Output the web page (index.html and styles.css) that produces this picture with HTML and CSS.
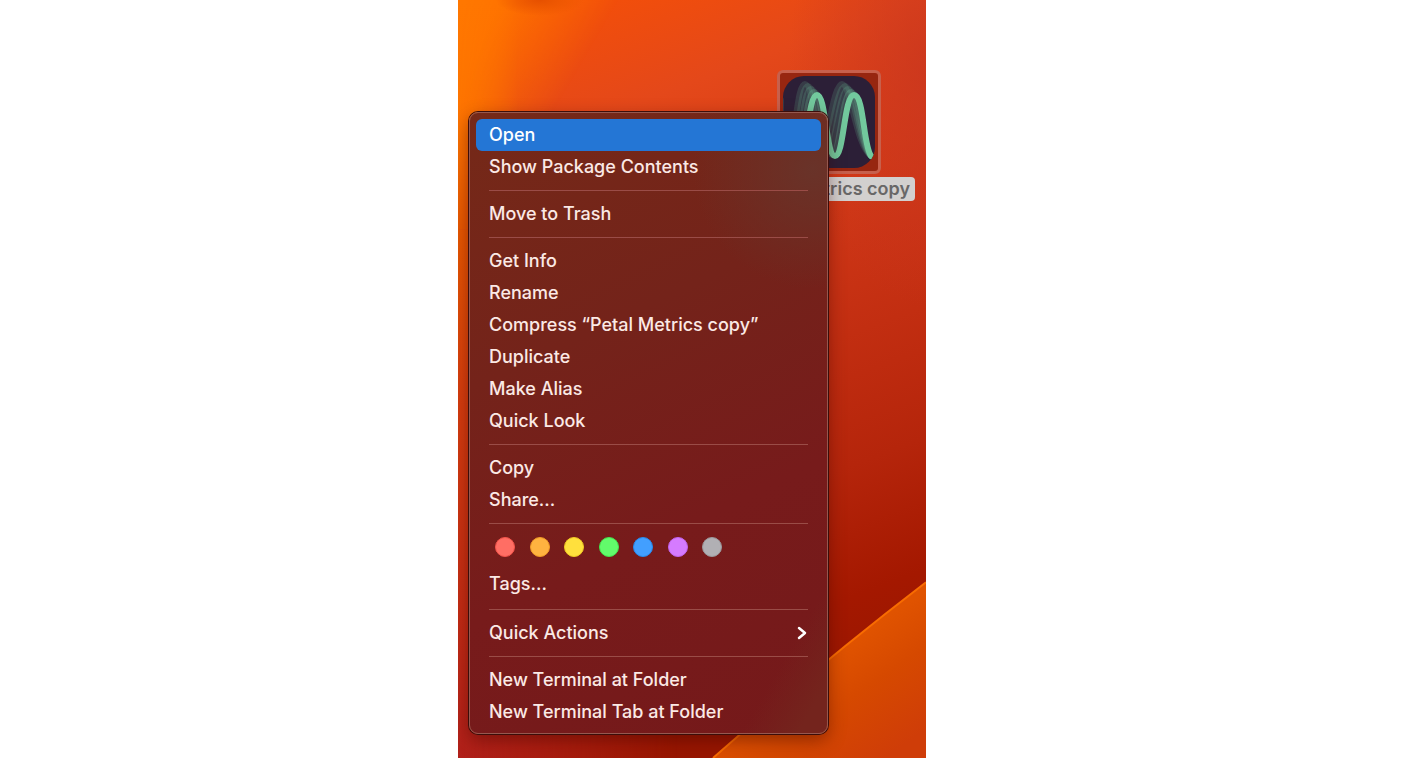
FILE: index.html
```html
<!DOCTYPE html>
<html lang="en">
<head>
<meta charset="utf-8">
<title>Desktop</title>
<link rel="stylesheet" href="styles.css">
</head>
<body>
<main class="desktop">
  <svg class="wallpaper" viewBox="0 0 468 759" preserveAspectRatio="none" aria-hidden="true">
    <defs>
      <linearGradient id="base" gradientUnits="userSpaceOnUse" x1="60" y1="0" x2="330" y2="720">
        <stop offset="0" stop-color="#f65006"/>
        <stop offset=".18" stop-color="#e4481a"/>
        <stop offset=".45" stop-color="#cb3415"/>
        <stop offset=".72" stop-color="#b5250b"/>
        <stop offset=".88" stop-color="#a41800"/>
        <stop offset="1" stop-color="#981600"/>
      </linearGradient>
      <linearGradient id="edge" x1="0" y1="0" x2="0" y2="1">
        <stop offset="0" stop-color="#ff7700"/>
        <stop offset=".17" stop-color="#fd7400"/>
        <stop offset=".3" stop-color="#e85900"/>
        <stop offset=".52" stop-color="#d63e0e"/>
        <stop offset=".8" stop-color="#c42d14"/>
        <stop offset="1" stop-color="#b0201a"/>
      </linearGradient>
      <linearGradient id="fade" gradientUnits="userSpaceOnUse" x1="0" y1="0" x2="120" y2="70">
        <stop offset="0" stop-color="#fff"/>
        <stop offset=".3" stop-color="#fff" stop-opacity=".85"/>
        <stop offset="1" stop-color="#fff" stop-opacity="0"/>
      </linearGradient>
      <linearGradient id="fade-low" gradientUnits="userSpaceOnUse" x1="0" y1="0" x2="220" y2="0">
        <stop offset="0" stop-color="#fff"/>
        <stop offset="1" stop-color="#fff" stop-opacity="0"/>
      </linearGradient>
      <linearGradient id="strip" gradientUnits="userSpaceOnUse" x1="0" y1="0" x2="60" y2="0">
        <stop offset="0" stop-color="#fff"/>
        <stop offset="1" stop-color="#fff" stop-opacity="0"/>
      </linearGradient>
      <mask id="left">
        <rect width="468" height="230" fill="url(#fade)"/>
        <rect width="60" height="230" fill="url(#strip)"/>
        <rect y="230" width="468" height="529" fill="url(#fade-low)"/>
      </mask>
      <radialGradient id="shade"><stop offset="0" stop-color="#e65000"/><stop offset="1" stop-color="#e65000" stop-opacity="0"/></radialGradient>
      <radialGradient id="corner"><stop offset="0" stop-color="#c8351f" stop-opacity=".8"/><stop offset="1" stop-color="#c8351f" stop-opacity="0"/></radialGradient>
      <linearGradient id="dune" gradientUnits="userSpaceOnUse" x1="375" y1="655" x2="440" y2="750">
        <stop offset="0" stop-color="#e05300"/>
        <stop offset=".4" stop-color="#d64900"/>
        <stop offset="1" stop-color="#cf3d08"/>
      </linearGradient>
    </defs>
    <rect width="468" height="759" fill="url(#base)"/>
    <ellipse cx="480" cy="70" rx="150" ry="240" fill="url(#corner)"/>
    <rect width="468" height="759" fill="url(#edge)" mask="url(#left)"/>
    <ellipse cx="82" cy="0" rx="44" ry="16" fill="url(#shade)"/>
    <path d="M255 759Q365 662 468 583V759Z" fill="url(#dune)"/>
    <path d="M255 759Q365 662 468 583" fill="none" stroke="#f86c00" stroke-width="2"/>
  </svg>

  <button class="file" type="button">
    <span class="thumb">
      <svg viewBox="0 0 92 92" aria-hidden="true">
        <defs>
          <clipPath id="tile"><rect width="92" height="92" rx="21"/></clipPath>
        </defs>
        <g clip-path="url(#tile)" fill="none" stroke-width="6" stroke-linecap="round">
          <rect width="92" height="92" fill="#2c1f37"/>
          <g stroke="#72c99d">
            <path opacity=".15" d="M-2 24V56"/>
            <path opacity=".17" d="M3 75C13 72 13 8 22 8S32 71 38 71S50 8 59 8S72 68 88 80"/>
            <path opacity=".17" d="M6 76C16 74 16 10 25 10S35 74 41 74S53 10 62 10S75 69 88 80"/>
            <path opacity=".19" d="M10 77C19 77 19 13 28 13S38 76 45 76S56 13 65 13S77 70 88 80"/>
            <path opacity=".25" d="M13 79C22 79 22 16 31 16S41 79 49 79S59 16 68 16S79 70 88 80"/>
            <path d="M15 80C24 80 25 19 34 19S43 80 52 80S61 19 71 19S80 69 88 80"/>
          </g>
        </g>
      </svg>
    </span>
    <span class="name">Petal Metrics copy</span>
  </button>

  <div class="menu" role="menu">
    <div class="group">
      <button class="item active" role="menuitem">Open</button>
      <button class="item" role="menuitem">Show Package Contents</button>
    </div>
    <div class="group">
      <button class="item" role="menuitem">Move to Trash</button>
    </div>
    <div class="group">
      <button class="item" role="menuitem">Get Info</button>
      <button class="item" role="menuitem">Rename</button>
      <button class="item" role="menuitem">Compress “Petal Metrics copy”</button>
      <button class="item" role="menuitem">Duplicate</button>
      <button class="item" role="menuitem">Make Alias</button>
      <button class="item" role="menuitem">Quick Look</button>
    </div>
    <div class="group">
      <button class="item" role="menuitem">Copy</button>
      <button class="item" role="menuitem">Share...</button>
    </div>
    <div class="group tags">
      <div class="dots">
        <button class="dot red" aria-label="Red"></button>
        <button class="dot orange" aria-label="Orange"></button>
        <button class="dot yellow" aria-label="Yellow"></button>
        <button class="dot green" aria-label="Green"></button>
        <button class="dot blue" aria-label="Blue"></button>
        <button class="dot purple" aria-label="Purple"></button>
        <button class="dot gray" aria-label="Gray"></button>
      </div>
      <button class="item" role="menuitem">Tags...</button>
    </div>
    <div class="group">
      <button class="item" role="menuitem" aria-haspopup="menu">Quick Actions
        <svg class="chevron" viewBox="0 0 10 14" aria-hidden="true"><path d="M2 2L8 7L2 12"/></svg>
      </button>
    </div>
    <div class="group">
      <button class="item" role="menuitem">New Terminal at Folder</button>
      <button class="item" role="menuitem">New Terminal Tab at Folder</button>
    </div>
  </div>
</main>
</body>
</html>
```
FILE: styles.css
```css
* { box-sizing: border-box; }

body {
  margin: 0;
  padding: 0 20px 4px 0;
  background: #fff;
  font-family: Inter, "Liberation Sans", sans-serif;
}

button {
  margin: 0;
  padding: 0;
  border: 0;
  background: none;
  color: inherit;
  font: inherit;
}

.desktop {
  position: relative;
  width: 100%;
  max-width: 468px;
  margin: 0 auto;
  padding: 112px 98px 24px 11px;
  overflow: hidden;
}

.wallpaper {
  position: absolute;
  inset: 0;
  width: 100%;
  height: 100%;
}

.file {
  position: absolute;
  top: 70px;
  right: 11px;
  display: flex;
  flex-direction: column;
  align-items: center;
  gap: 3px;
}

.thumb {
  display: block;
  width: 104px;
  padding: 3px;
  border: 3px solid #c7604c;
  border-radius: 6px;
  background: #972610;
}

.thumb svg { display: block; width: 100%; }

.name {
  padding: 0 5px;
  border-radius: 4px;
  background: #d2d0cf;
  color: #686767;
  font-size: 18px;
  font-weight: 600;
  line-height: 24px;
  white-space: nowrap;
}

.menu {
  position: relative;
  padding: 6px 6px 5px;
  border: 1px solid #96584f;
  border-radius: 9px;
  background:
    radial-gradient(circle at 96% 9%, #693329 0, rgba(110, 42, 32, 0) 120px),
    linear-gradient(to bottom right, rgba(116, 34, 28, 0) 88%, #74241d 96%),
    linear-gradient(155deg, #752918 0%, #74231a 35%, #771b1b 65%, #75191a 100%);
  box-shadow: 0 0 0 1px #3c0d09, 0 6px 18px rgba(60, 5, 0, .45);
  color: #fbe9e5;
  font-size: 18px;
  font-weight: 500;
  line-height: 32px;
}

.group + .group::before {
  content: "";
  display: block;
  height: 1px;
  margin: 7px 13px;
  background: #9a4c47;
}

.item {
  display: flex;
  align-items: center;
  justify-content: space-between;
  width: 100%;
  height: 32px;
  padding: 0 14px 0 13px;
  border-radius: 6px;
  text-align: left;
  white-space: nowrap;
}

.active {
  background: #2476d5;
  color: #fff;
}

.tags { padding-bottom: 2px; }

.dots {
  display: flex;
  justify-content: space-between;
  height: 37px;
  padding: 6px 99px 6px 19px;
}

.dot {
  width: 20px;
  height: 20px;
  border: 1px solid;
  border-radius: 50%;
}

.red { background: #ff6e64; border-color: #f4544b; }
.orange { background: #ffb340; border-color: #f29c26; }
.yellow { background: #ffe03d; border-color: #f2cc22; }
.green { background: #62fb6b; border-color: #42e54c; }
.blue { background: #429fff; border-color: #258bf0; }
.purple { background: #d57bff; border-color: #c263ef; }
.gray { background: #b1b0b4; border-color: #9b999d; }

.chevron {
  width: 10px;
  height: 14px;
  fill: none;
  stroke: #fff;
  stroke-width: 2.5;
  stroke-linecap: round;
  stroke-linejoin: round;
}
```
